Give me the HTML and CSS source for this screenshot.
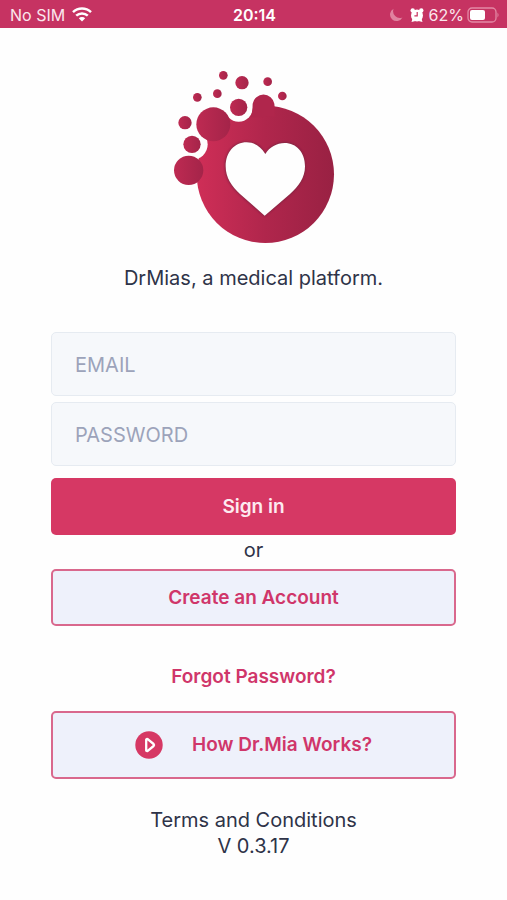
FILE: index.html
```html
<!DOCTYPE html>
<html lang="en">
<head>
<meta charset="utf-8">
<meta name="viewport" content="width=device-width, initial-scale=1">
<title>DrMias</title>
<link rel="stylesheet" href="styles.css">
</head>
<body>
<header class="status">
  <div class="status-left">
    <span>No SIM</span>
    <svg width="20" height="15" viewBox="0 0 20 15" aria-hidden="true">
      <g fill="none" stroke="#fff" stroke-width="2.5">
        <path d="M1 5.2a13 13 0 0 1 18 0"/>
        <path d="M4.2 8.7a8.4 8.4 0 0 1 11.6 0"/>
      </g>
      <path d="M6.8 11.2a4.6 4.6 0 0 1 6.4 0L10 14.6z" fill="#fff"/>
    </svg>
  </div>
  <time class="clock">20:14</time>
  <div class="status-right">
    <svg width="14" height="14" viewBox="0 0 14 14" aria-hidden="true">
      <path d="M4.600 .8A6.500 6.500 0 1 0 13.400 9.400A6.700 6.700 0 0 1 4.600 .8z" fill="#e0829f"/>
    </svg>
    <svg class="alarm" width="14" height="14" viewBox="0 0 14 14" aria-hidden="true">
      <g fill="#fff">
        <circle cx="7" cy="7.5" r="6"/>
        <circle cx="2.7" cy="2.500" r="2.200"/>
        <circle cx="11.3" cy="2.500" r="2.200"/>
        <path d="M1.500 14l1-3.500 3 2.500zM12.500 14l-1-3.500-3 2.500z"/>
      </g>
      <path d="M7.2 4v3.800H4.400" fill="none" stroke="#c93360" stroke-width="1.200"/>
    </svg>
    <span>62%</span>
    <svg width="32" height="16" viewBox="0 0 32 16" aria-hidden="true">
      <rect x="1" y="1" width="28" height="14" rx="4" fill="none" stroke="#e389a5" stroke-width="1.300"/>
      <rect x="3" y="3" width="15" height="10" rx="2" fill="#fff"/>
      <path d="M30.500 5.500q2 2.500 0 5z" fill="#e389a5"/>
    </svg>
  </div>
</header>

<main class="page">
  <svg class="logo" width="191" height="195" viewBox="-6 0 573 585" role="img" aria-label="DrMias logo">
    <defs>
      <linearGradient id="body" x1="0" y1="0" x2="1" y2="0">
        <stop offset="0" stop-color="#cf2e57"/>
        <stop offset=".5" stop-color="#b0264c"/>
        <stop offset="1" stop-color="#992143"/>
      </linearGradient>
      <linearGradient id="bubble" x1="0" y1="0" x2="1" y2="0">
        <stop offset="0" stop-color="#be2a52"/>
        <stop offset="1" stop-color="#a42449"/>
      </linearGradient>
      <filter id="soft" x="-10%" y="-10%" width="120%" height="120%">
        <feGaussianBlur stdDeviation="3"/>
      </filter>
    </defs>
    <circle cx="316" cy="343" r="206" fill="url(#body)"/>
    <g fill="#fefefe">
      <circle cx="236" cy="142" r="43"/>
      <circle cx="97" cy="253" r="46"/>
    </g>
    <g fill="url(#bubble)">
      <circle cx="160" cy="193" r="51"/>
      <circle cx="86" cy="331" r="44"/>
      <circle cx="236" cy="142" r="26"/>
      <circle cx="96" cy="253" r="26"/>
      <circle cx="75" cy="188" r="20"/>
      <circle cx="112" cy="112" r="13"/>
      <circle cx="172" cy="101" r="13"/>
      <circle cx="190" cy="46" r="13"/>
      <circle cx="246" cy="68" r="20"/>
      <circle cx="323" cy="65" r="13"/>
      <circle cx="367" cy="108" r="13"/>
    </g>
    <path d="M270 172Q278 160 278 131A33 33 0 0 1 343 131L344 142L344 170z" fill="#b0264c"/>
    <path d="M316 281C300 254 280 245 260 245C222 245 195 276 195 319C195 354 213 380 238 403L314 469L392 403C418 380 436 354 436 319C436 276 410 247 374 247C350 247 329 259 316 281z" fill="#7c2741" filter="url(#soft)"/>
    <path d="M316 282C300 256 280 247 260 247C223 247 197 277 197 319C197 353 215 379 240 402L314 467L390 402C416 379 435 353 435 319C435 277 409 249 374 249C350 249 329 261 316 282z" fill="#fefefe"/>
  </svg>

  <p class="tagline">DrMias, a medical platform.</p>

  <form class="form">
    <input class="field" type="email" placeholder="EMAIL" aria-label="Email">
    <input class="field" type="password" placeholder="PASSWORD" aria-label="Password">
    <button class="btn primary" type="submit">Sign in</button>
    <span class="or">or</span>
    <button class="btn outline" type="button">Create an Account</button>
  </form>

  <a class="forgot" href="#forgot">Forgot Password?</a>

  <button class="btn outline works" type="button">
    <svg width="28" height="28" viewBox="0 0 28 28" aria-hidden="true">
      <circle cx="14" cy="14" r="13.700" fill="#d63864"/>
      <path d="M11.200 8.600v10.800q.3 1 1.500.5l5.900-4.900q.9-1 0-2l-5.900-4.900q-1.200-.5-1.500.5z" fill="none" stroke="#fff" stroke-width="2.300" stroke-linejoin="round"/>
    </svg>
    <span>How Dr.Mia Works?</span>
  </button>

  <footer class="footer">
    <a href="#terms">Terms and Conditions</a>
    <span>V 0.3.17</span>
  </footer>
</main>
</body>
</html>
```

FILE: styles.css
```css
* {
  box-sizing: border-box;
}

body {
  margin: 0;
  background: #fefefe;
  color: #2e3348;
  font-family: Inter, "Liberation Sans", sans-serif;
  font-size: 20px;
  line-height: 26px;
}

svg {
  display: block;
  flex: none;
}

.status {
  display: grid;
  grid-template-columns: 1fr auto 1fr;
  align-items: center;
  height: 28px;
  padding: 1px 8px 0 10px;
  background: #c63362;
  color: #fbe6ed;
  font-size: 16px;
  line-height: 24px;
}

.status-left,
.status-right {
  display: flex;
  align-items: center;
  gap: 7px;
}

.status-right {
  justify-content: flex-end;
  gap: 3px;
}

.alarm {
  margin: 0 2px 0 4px;
}

.clock {
  color: #fff;
  font-weight: 600;
}

.page {
  display: flex;
  flex-direction: column;
  align-items: center;
  padding: 32px 51px 40px;
}

.tagline {
  margin: 10px 0 41px;
}

.form {
  display: flex;
  flex-direction: column;
  width: 100%;
}

.field {
  width: 100%;
  height: 64px;
  margin-bottom: 6px;
  padding: 2px 23px 0;
  border: 1px solid #e6ebf1;
  border-radius: 5px;
  background: #f6f8fb;
  color: #2e3348;
  font: inherit;
}

.field::placeholder {
  color: #9ca3ba;
  opacity: 1;
}

.btn {
  width: 100%;
  height: 57px;
  border: 0;
  border-radius: 5px;
  font: inherit;
  font-size: 19px;
  font-weight: 600;
}

.primary {
  margin-top: 6px;
  background: #d63864;
  color: #fdeaf0;
}

.or {
  padding-bottom: 4px;
  line-height: 30px;
  text-align: center;
}

.outline {
  border: 2px solid #d9688d;
  background: #eef1fb;
  color: #d0366a;
}

.forgot {
  margin: 38px 0 21px;
  color: #d0366a;
  font-size: 19px;
  font-weight: 600;
  text-decoration: none;
}

.works {
  display: flex;
  align-items: center;
  justify-content: center;
  gap: 29px;
  height: 68px;
}

.footer {
  display: flex;
  flex-direction: column;
  align-items: center;
  margin-top: 28px;
}

.footer a {
  color: inherit;
  text-decoration: none;
}
```
